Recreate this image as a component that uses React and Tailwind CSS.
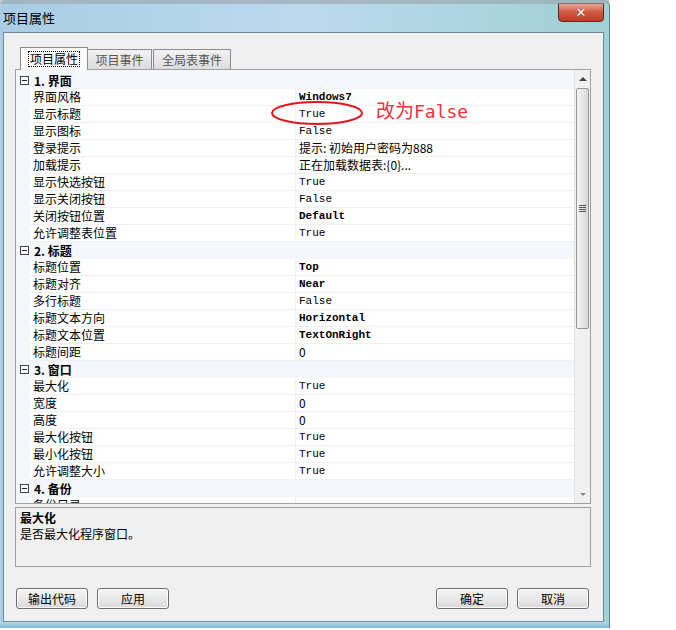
const cjk = { fontFamily: '"Noto Sans CJK SC", "Noto Sans", sans-serif' };
const mono = { fontFamily: '"Liberation Mono", "DejaVu Sans Mono", monospace' };

const sections = [
  {
    title: "1. 界面",
    rows: [
      ["界面风格", "Windows7", "b"],
      ["显示标题", "True"],
      ["显示图标", "False"],
      ["登录提示", "提示: 初始用户密码为888", "c"],
      ["加载提示", "正在加载数据表:{0}...", "c"],
      ["显示快选按钮", "True"],
      ["显示关闭按钮", "False"],
      ["关闭按钮位置", "Default", "b"],
      ["允许调整表位置", "True"],
    ],
  },
  {
    title: "2. 标题",
    rows: [
      ["标题位置", "Top", "b"],
      ["标题对齐", "Near", "b"],
      ["多行标题", "False"],
      ["标题文本方向", "Horizontal", "b"],
      ["标题文本位置", "TextOnRight", "b"],
      ["标题间距", "0", "c"],
    ],
  },
  {
    title: "3. 窗口",
    rows: [
      ["最大化", "True"],
      ["宽度", "0", "c"],
      ["高度", "0", "c"],
      ["最大化按钮", "True"],
      ["最小化按钮", "True"],
      ["允许调整大小", "True"],
    ],
  },
  {
    title: "4. 备份",
    rows: [["备份目录", ""]],
  },
];

function Category({ title }) {
  return (
    <div className="flex h-[17px] items-center bg-[#f3f6fb]">
      <div className="w-[14px] flex justify-center pl-[2px]">
        <div className="w-[9px] h-[9px] border border-[#444] bg-white flex items-center justify-center">
          <div className="w-[5px] h-px bg-[#222]" />
        </div>
      </div>
      <span className="pl-[4px] text-[12px] font-bold text-black" style={cjk}>
        {title}
      </span>
    </div>
  );
}

function Row({ label, value, kind }) {
  return (
    <div className="flex h-[17px]">
      <div className="w-[14px] bg-[#f3f6fb]" />
      <div className="w-[265px] bg-white border-b border-[#eef0f3] pl-[3px] text-[12px] leading-[16px] text-black" style={cjk}>
        {label}
      </div>
      <div
        className={`flex-1 bg-white border-b border-l border-[#eef0f3] pl-[3px] leading-[16px] text-black ${
          kind === "c" ? "text-[12px]" : "text-[11px]"
        } ${kind === "b" ? "font-bold" : ""}`}
        style={kind === "c" ? cjk : mono}
      >
        {value}
      </div>
    </div>
  );
}

function Button({ children }) {
  return (
    <button
      className="w-[72px] h-[21px] rounded-[3px] border border-[#707070] bg-gradient-to-b from-[#f6f6f6] via-[#e9e9e9] to-[#d8d8d8] text-[12px] text-black shadow-[inset_0_0_0_1px_#fcfcfc]"
      style={cjk}
    >
      {children}
    </button>
  );
}

export default function App() {
  return (
    <div className="w-[676px] h-[630px] bg-white relative overflow-hidden" style={cjk}>
      <div className="w-[610px] h-[628px] flex flex-col bg-gradient-to-r from-[#a8cde4] via-[#bcd9ee] to-[#9fd0d4] rounded-t-[6px] border-r border-[#5d7f8f]">
        <div className="h-[4px] bg-[#9aa3aa] opacity-60" />
        <div className="h-[28px] flex items-start justify-between pl-[3px] pr-[5px]">
          <span className="text-[13px] text-black mt-[4px]" style={cjk}>
            项目属性
          </span>
          <div className="w-[46px] h-[19px] -mt-[1px] rounded-b-[4px] border border-[#5a2a22] bg-gradient-to-b from-[#e9a394] via-[#cf5842] to-[#c0392a] flex items-center justify-center">
            <span className="text-white font-bold text-[13px] leading-none" style={{ fontFamily: '"DejaVu Sans", sans-serif', textShadow: "0 0 1px #333" }}>
              ✕
            </span>
          </div>
        </div>
        <div className="ml-[3px] mr-[5px] h-[590px] bg-[#f0f0f0] border border-[#6f8797] flex flex-col pt-[13px] pl-[11px] pr-[12px]">
          {/* tabs */}
          <div className="h-[23px] flex items-end pl-[5px]">
            <div className="h-[23px] w-[68px] bg-[#fbfbfb] border border-b-0 border-[#898c95] flex items-center justify-center relative z-10 -mb-px">
              <span className="border border-dotted border-black px-[1px] leading-[14px] text-[12px] text-black" style={cjk}>
                项目属性
              </span>
            </div>
            <div className="h-[20px] w-[64px] bg-gradient-to-b from-[#f2f2f2] to-[#dcdcdc] border border-b-0 border-l-0 border-[#898c95] flex items-center justify-center text-[12px] text-[#555]" style={cjk}>
              项目事件
            </div>
            <div className="h-[20px] w-[78px] ml-px bg-gradient-to-b from-[#f2f2f2] to-[#dcdcdc] border border-b-0 border-[#898c95] flex items-center justify-center text-[12px] text-[#555]" style={cjk}>
              全局表事件
            </div>
          </div>
          {/* grid */}
          <div className="h-[435px] border border-[#a0a0a0] bg-white flex">
            <div className="flex-1 overflow-hidden pt-[2px] bg-[#f3f6fb]">
              {sections.map((s) => (
                <div key={s.title}>
                  <Category title={s.title} />
                  {s.rows.map(([l, v, k]) => (
                    <Row key={l} label={l} value={v} kind={k} />
                  ))}
                </div>
              ))}
            </div>
            <div className="w-[16px] bg-[#f0f0f0] border-l border-[#e3e3e3] flex flex-col">
              <div className="h-[18px] flex items-center justify-center">
                <div className="w-0 h-0 border-l-[4px] border-r-[4px] border-b-[4px] border-l-transparent border-r-transparent border-b-[#444]" />
              </div>
              <div className="h-[241px] mx-px rounded-[2px] border border-[#979797] bg-gradient-to-r from-[#f3f3f3] via-[#e6e6e6] to-[#d6d6d6] flex items-center justify-center">
                <div className="flex flex-col gap-[1px]">
                  <div className="w-[7px] h-px bg-[#555]" />
                  <div className="w-[7px] h-px bg-[#555]" />
                  <div className="w-[7px] h-px bg-[#555]" />
                  <div className="w-[7px] h-px bg-[#555]" />
                </div>
              </div>
              <div className="flex-1" />
              <div className="h-[17px] flex items-center justify-center">
                <div className="w-0 h-0 border-l-[3px] border-r-[3px] border-t-[3px] border-l-transparent border-r-transparent border-t-[#888]" />
              </div>
            </div>
          </div>
          {/* description */}
          <div className="h-[60px] mt-[3px] border border-[#a0a0a0] bg-[#f0f0f0] px-[4px] pt-[2px] text-[12px] leading-[16px] text-black" style={cjk}>
            <div className="font-bold">最大化</div>
            <div>是否最大化程序窗口。</div>
          </div>
          {/* buttons */}
          <div className="mt-[21px] flex justify-between pl-px pr-[2px]">
            <div className="flex gap-[9px]">
              <Button>输出代码</Button>
              <Button>应用</Button>
            </div>
            <div className="flex gap-[9px]">
              <Button>确定</Button>
              <Button>取消</Button>
            </div>
          </div>
        </div>
        <div className="flex-1 bg-gradient-to-b from-[#b5d7e6] to-[#7fb8cc]" />
      </div>

      {/* annotation */}
      <svg className="absolute left-[270px] top-[100px]" width="94" height="26" viewBox="0 0 94 26">
        <ellipse cx="47" cy="13" rx="45" ry="11" fill="none" stroke="#e8141a" strokeWidth="2" />
      </svg>
      <span className="absolute left-[376px] top-[98px] text-[19px] leading-[24px] text-[#f0303a]" style={{ fontFamily: '"Noto Sans CJK SC", sans-serif' }}>
        改为<span style={{ fontFamily: '"DejaVu Sans Mono", monospace', fontSize: "18px" }}>False</span>
      </span>
    </div>
  );
}
